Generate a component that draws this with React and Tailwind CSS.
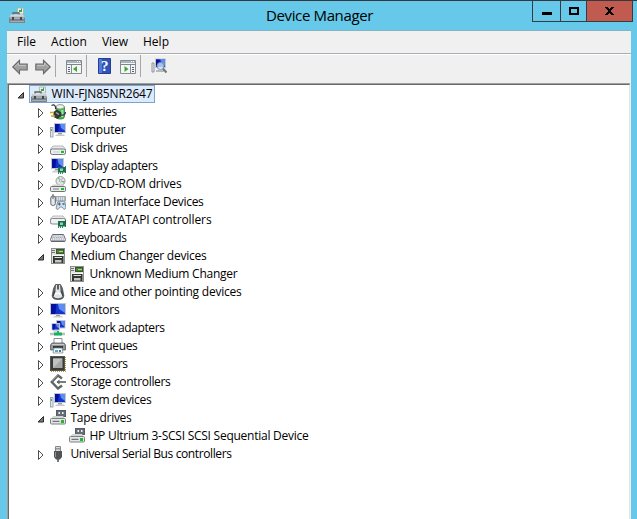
import { useLayoutEffect, useRef, useState } from "react";

// Spreads a label evenly over a fixed advance width.
function Label({ text, width, className = "" }) {
  const ref = useRef(null);
  const [gap, setGap] = useState(0);
  useLayoutEffect(() => {
    const natural = ref.current.getBoundingClientRect().width;
    setGap((width - natural) / text.length);
  }, [text, width]);
  return (
    <span ref={ref} className={`whitespace-pre ${className}`} style={{ letterSpacing: gap }}>
      {text}
    </span>
  );
}

function Svg({ children, className = "size-4" }) {
  return (
    <svg viewBox="0 0 16 16" className={`${className} shrink-0`} fill="none">
      {children}
    </svg>
  );
}

function Screen({ x = 0, y = 0, w = 10, h = 8 }) {
  return (
    <g>
      <rect x={x} y={y} width={w} height={h} fill="#c3c7cc" />
      <rect x={x + 1} y={y + 1} width={w - 2} height={h - 2} fill="#1534cc" />
      <path d={`M${x + w / 2} ${y + 1}H${x + w - 1}V${y + h - 2}L${x + w / 2 + 1} ${y + h / 2}Z`} fill="#5d8df2" />
      <path d={`M${x + 1} ${y + 1}h${w / 3}l-1 ${h - 2}H${x + 1}Z`} fill="#0511a0" />
    </g>
  );
}

const Toolbox = () => (
  <>
    <path d="M8.500 7V1h6v6Z" fill="#eceeee" stroke="#a9adaf" strokeWidth=".8" />
    <path d="M10 5V3h2V1.500h1V5Z" fill="#35a83a" />
    <path d="M4 9V6h6v3" stroke="#5d6264" strokeWidth="1.300" />
    <path d="M1 8h14l.7 3H.3Z" fill="#c2c7ca" />
    <path d="M2 8h12" stroke="#e1e5e7" />
    <path d="M0 10.500h16V16H0Z" fill="#7c858b" />
    <path d="M1 11.500h14M1 14.500h14" stroke="#a5adb2" />
    <path d="M3 10h2v3H3ZM11 10h2v3h-2Z" fill="#43494d" />
  </>
);

const Battery = () => (
  <>
    <rect x="6" y="1" width="8.500" height="14" rx="3" fill="#48bd54" stroke="#35663b" strokeWidth=".7" />
    <ellipse cx="10.200" cy="2.800" rx="4" ry="2.200" fill="#eef1ee" stroke="#7d857d" strokeWidth=".7" />
    <path d="M12.300 6v7" stroke="#a3ecaa" strokeWidth="1.800" />
    <path d="M1.500 1.500c3-1.500 4.500.5 4 3.500M11 11c3 .5 4.500-1 4.500-3" stroke="#333" strokeWidth="1.200" />
    <path d="M3.500 8 7 5.500l4.300 3v3.500L7.500 15l-4-2Z" fill="#343838" />
    <path d="m6 8.500 3 2" stroke="#a0a6a6" strokeWidth="1.500" />
    <path d="M0 8.500h4M1 12h4" stroke="#d5a917" strokeWidth="1.500" />
  </>
);

const Computer = () => (
  <>
    <rect x=".5" y="5.500" width="2.500" height="9.500" fill="#e3e6e8" stroke="#9aa0a4" strokeWidth=".9" />
    <path d="M1 7h1v2H1Z" fill="#35bd4b" />
    <Screen x={4} y={1} w={12} h={10} />
    <path d="M8 11h4v1.500H8Z" fill="#969da3" />
    <path d="M6 12.500h8l1 1.500H5Z" fill="#c4c8cb" />
  </>
);

const Disk = () => (
  <>
    <path d="M3 6h10l2.500 3v4.500H.5V9Z" fill="#e6e8e9" stroke="#a5a9ab" strokeWidth=".8" />
    <rect x=".5" y="9" width="15" height="5.500" rx="1.800" fill="#eff0f0" stroke="#74797b" />
    <path d="M3 12h7" stroke="#c5c8c9" />
    <rect x="11" y="10.800" width="3" height="2.200" fill="#24b929" />
  </>
);

const Card = () => (
  <>
    <path d="M8 9h7.500v5.500H8Z" fill="#16704e" />
    <path d="M8.500 14v2M10.500 14v2M12.500 14v2" stroke="#2b8f68" />
    <rect x="10" y="10.500" width="3" height="2.500" fill="#98cbb7" />
    <path d="M15.500 8v7" stroke="#224f3e" strokeWidth=".8" />
  </>
);

const Display = () => (
  <>
    <Screen x={1} y={0} w={13} h={11} />
    <path d="M5 11h3v1.500H5Z" fill="#9aa0a5" />
    <path d="M3 12.500h5v2H2Z" fill="#cbd0d4" />
    <Card />
  </>
);

const Dvd = () => (
  <>
    <circle cx="10.500" cy="5" r="4.500" fill="#e4e7e6" stroke="#9a9e9e" />
    <path d="m10.500 5-3-3 1.500-1ZM10.500 5l3.500 2 .5-2Z" fill="#72b982" />
    <path d="m10.500 5 2-3.500 1 1Z" fill="#c4a4c4" />
    <circle cx="10.500" cy="5" r="1.100" fill="#fff" stroke="#8b9090" strokeWidth=".6" />
    <path d="m3 8.500-2.500 3h15l-2.500-3Z" fill="#d0d4d5" />
    <rect x=".5" y="10.500" width="15" height="5" rx="1" fill="#e7e9e9" stroke="#6f7476" />
    <path d="M3 13h6" stroke="#777c7e" />
    <path d="M11 12h3v2h-3Z" fill="#1dba24" />
  </>
);

const Hid = () => (
  <>
    <path d="M5 2.500h10.500V7H5Z" fill="#dde0e2" stroke="#8d9397" strokeWidth=".8" />
    <path d="M6 4h9M6 6h9" stroke="#8a9197" strokeDasharray="1 1" />
    <rect x=".8" y="2" width="4.500" height="9.500" rx="2" fill="#e6eaec" stroke="#5d666e" />
    <path d="M3 0v5" stroke="#535b62" />
    <path d="m7.500 8 2-.7h4l1.500.7 1 6-2 1.500L12 13h-2l-2 2.500-2-1Z" fill="#d4e0ea" stroke="#6a7d8c" strokeWidth=".8" />
    <path d="M7.800 10h3M9.300 8.500v3" stroke="#31557b" />
    <path d="M12.500 9h2v2h-2Z" fill="#3f83c4" />
  </>
);

const Ide = () => (
  <>
    <path d="M3 4h10l2.500 3v4.500H.5V7Z" fill="#e6e8e9" stroke="#a0a5a8" strokeWidth=".7" />
    <rect x=".5" y="6.500" width="15" height="5.500" rx="1.800" fill="#f0f2f2" stroke="#858b8e" />
    <Card />
  </>
);

const Keyboard = () => (
  <>
    <path d="m2.500 4.500h11l2 5-.7 2H1.200l-.7-2Z" fill="#e9ebee" stroke="#646975" />
    <path d="M3 6h10M2.500 7.500h11M2 9h12" stroke="#8b90a0" strokeDasharray="1 .8" strokeWidth=".9" />
    <path d="M1.500 11h13" stroke="#595e6a" />
  </>
);

const Changer = () => (
  <>
    <rect x="1.500" y=".5" width="13" height="15" fill="#e2e3df" stroke="#8b8e89" />
    <path d="M2 2.500h3M2 4.500h3" stroke="#6f726d" />
    <rect x="6.500" y="1.500" width="7" height="4" fill="#3f8a22" stroke="#454a45" />
    <path d="M9 3.500h4" stroke="#a2e46e" />
    <path d="M2 7.500h12" stroke="#f8f8f6" />
    <rect x="3" y="8" width="10.500" height="7" fill="#333735" />
    <path d="M4.500 9.500h7.500" stroke="#dcdedb" />
    <path d="M5 12h6.500v2.500H5Z" fill="#c5c8c5" />
  </>
);

const Mouse = () => (
  <>
    <path d="M5.500.5h5l2 4 1.300 7c0 3-2 4-5.800 4s-5.800-1-5.800-4l1.300-7Z" fill="#5c6165" stroke="#3e4346" strokeWidth=".7" />
    <path d="M6 1h4l.5 6 2 5c-1 3-8 3-9 0l2-5Z" fill="#e1e4e6" />
    <path d="M8 1v4.500" stroke="#292d30" strokeWidth="1.500" />
    <path d="M5.500 10.500q2.500-3 5 0" stroke="#fff" strokeWidth="1.500" />
    <path d="M5 7 3 12M11 7l2 5" stroke="#34393c" />
  </>
);

const Monitor = () => (
  <>
    <Screen x={0} y={1} w={16} h={12} />
    <path d="M6 13h4v1H6Z" fill="#979da2" />
    <path d="M4 14h8l1 1.500H3Z" fill="#cbd0d4" />
  </>
);

const Network = () => (
  <>
    <Screen x={6} y={0} w={9.5} h={8.5} />
    <Screen x={1.5} y={3} w={8.5} h={7.5} />
    <path d="M4 10.500h4v1H3Z" fill="#b4bcc2" />
    <path d="M8 11v3" stroke="#36a55e" strokeWidth="2" />
    <path d="M0 14h15" stroke="#b7c3bc" strokeWidth="2.500" />
    <path d="M4 14h8" stroke="#15b065" strokeWidth="3" />
  </>
);

const Printer = () => (
  <>
    <path d="M4 .5h8V6H4Z" fill="#fff" stroke="#8a8e91" />
    <path d="M2 5h12l1.500 2v5H.5V7Z" fill="#92989c" stroke="#565b5f" strokeWidth=".8" />
    <path d="M2 6.500h12" stroke="#c7cbce" />
    <path d="M3 9h10" stroke="#34393c" strokeWidth="2" />
    <path d="M4 10h8l1 5H3Z" fill="#f6f8f9" stroke="#797f84" strokeWidth=".7" />
    <path d="M5 12h3v2H5Z" fill="#4ba7cb" />
    <path d="M9 12h2v2H9Z" fill="#426fa5" />
  </>
);

const Cpu = () => (
  <>
    <path d="M1 15.300h15M15.300 1v14" stroke="#c29a3a" strokeWidth="1.400" strokeDasharray="1 1" />
    <rect x=".5" y=".5" width="14" height="14" fill="#3a3a3a" stroke="#555" />
    <rect x="3" y="2.500" width="9.500" height="9.500" fill="#a5a7a7" />
    <path d="M3 12V2.500h9.500Z" fill="#c0c2c2" />
  </>
);

const Storage = () => (
  <>
    <path d="M12 4.500 8 1.500 1.800 8 8 14.500l4-3" stroke="#606464" strokeWidth="2.400" />
    <path d="M7 8h9" stroke="#6b6f6f" strokeWidth="1.800" />
    <path d="m6.500 8 3-2.500v5Z" fill="#606464" />
    <path d="M8 1 2 7" stroke="#999d9d" strokeWidth=".8" />
  </>
);

const Tape = () => (
  <>
    <rect x="6.500" y=".5" width="9" height="6" fill="#676d72" stroke="#565c61" />
    <path d="M8.500 2h1.500v2H8.500ZM12 2h1.500v2H12Z" fill="#f0f2f3" />
    <path d="m3 6-2.500 3.500h15L13 6Z" fill="#d3d6d6" />
    <rect x=".5" y="8.500" width="15" height="5.500" rx="1" fill="#e4e6e6" stroke="#7a8083" />
    <path d="M2.500 11.300h7" stroke="#555b5e" />
    <path d="M11 10h3v3h-3Z" fill="#22b829" />
  </>
);

const Usb = () => (
  <>
    <path d="M5.500.5h5V6h-5Z" fill="#d9dbdc" stroke="#85898b" />
    <path d="M6.500 2h1v1.500h-1ZM8.500 2h1v1.500h-1Z" fill="#555" />
    <path d="M4 5h8v6l-2 2.500H6L4 11Z" fill="#505456" />
    <path d="M5.500 6v5" stroke="#8f9496" />
    <path d="M8 13v3" stroke="#4c5052" strokeWidth="1.500" />
  </>
);

const devices = [
  ["Batteries", 46, Battery],
  ["Computer", 55, Computer],
  ["Disk drives", 57, Disk],
  ["Display adapters", 87, Display],
  ["DVD/CD-ROM drives", 111, Dvd],
  ["Human Interface Devices", 133, Hid],
  ["IDE ATA/ATAPI controllers", 141, Ide],
  ["Keyboards", 56, Keyboard],
  ["Medium Changer devices", 136, Changer, ["Unknown Medium Changer", 148]],
  ["Mice and other pointing devices", 171, Mouse],
  ["Monitors", 49, Monitor],
  ["Network adapters", 94, Network],
  ["Print queues", 67, Printer],
  ["Processors", 57, Cpu],
  ["Storage controllers", 100, Storage],
  ["System devices", 81, Computer],
  ["Tape drives", 61, Tape, ["HP Ultrium 3-SCSI SCSI Sequential Device", 219]],
  ["Universal Serial Bus controllers", 161, Usb],
];

function Arrow({ open }) {
  return (
    <svg viewBox="0 0 8 18" className="h-[18px] w-2 shrink-0">
      {open ? (
        <path d="M6.500 7.500v5.500H1Z" fill="#777" stroke="#2b2b2b" />
      ) : (
        <path d="M1.500 5.500v9L6 10Z" fill="#fff" stroke="#4d4d4d" />
      )}
    </svg>
  );
}

function DeviceRow({ device }) {
  const [name, width, Icon, child] = device;
  return (
    <li>
      <div className="flex h-[18px] items-center pl-7">
        <Arrow open={!!child} />
        <span className="ml-[5px] flex items-center gap-[4.500px]">
          <Svg><Icon /></Svg>
          <Label text={name} width={width} />
        </span>
      </div>
      {child && (
        <div className="flex h-[18px] items-center gap-[4.500px] pl-[60px]">
          <Svg><Icon /></Svg>
          <Label text={child[0]} width={child[1]} />
        </div>
      )}
    </li>
  );
}

function Nav({ flip }) {
  return (
    <Svg className={flip ? "size-4 -scale-x-100" : "size-4"}>
      <path d="m.8 8 6.700-6.700V5h7.700v6H7.500v3.700Z" fill="#a0a0a0" stroke="#686868" strokeWidth="1.100" />
      <path d="m2.500 8 4-4v2.500H14" stroke="#c3c3c3" strokeWidth="1" />
    </Svg>
  );
}

function Pane({ right }) {
  return (
    <Svg>
      <path d="M.5 1.500h15v13H.5Z" fill="#f4f5f6" stroke="#848b92" />
      <path d="M1 3h14" stroke="#a9b4bf" strokeWidth="2" />
      <path d="M11 2.500h1M13 2.500h1" stroke="#fff" />
      <path d="M1 5.500h14" stroke="#7e858b" />
      {right ? (
        <>
          <path d="M10.500 6v8" stroke="#858b90" />
          <path d="M12 8.500h2M12 10.500h2M12 12.500h2" stroke="#536575" />
          <path d="m4.500 7 4 3-4 3Z" fill="#43a62c" />
        </>
      ) : (
        <>
          <path d="M5.500 6v8" stroke="#858b90" />
          <path d="M2 8.500h2M2 10.500h2M2 12.500h2" stroke="#536575" />
          <path d="m11 7-4 3 4 3Z" fill="#43a62c" />
        </>
      )}
    </Svg>
  );
}

const Divider = () => <span className="h-[22px] w-px bg-[#a7a7a7]" />;

export default function App() {
  return (
    <main className="flex h-[519px] w-[637px] flex-col overflow-hidden border-t border-[#35383c] bg-[#66c9e9] font-['Open_Sans','Noto_Sans',sans-serif] text-[12px] leading-[18px] text-black">
      <header className="flex h-[29px] shrink-0 items-start">
        <span className="flex w-[266px] pt-[6px] pl-[9px]"><Svg><Toolbox /></Svg></span>
        <h1 className="w-[266px] pt-[3px] text-[15px] leading-[23px]"><Label text="Device Manager" width={107} /></h1>
        <div className="flex h-[21px] border-x border-b border-[#383c40]">
          <button className="flex w-[27px] items-start justify-center pt-[11px]"><i className="h-[3px] w-[10px] bg-black" /></button>
          <button className="flex w-[26px] items-start justify-center border-l border-[#383c40] pt-[6px]"><i className="h-2 w-[10px] border-2 border-black" /></button>
          <button className="flex w-[46px] items-start justify-center border-l border-[#383c40] bg-[#c15b50] pt-[6px]">
            <svg viewBox="0 0 9 8" className="h-2 w-[9px]"><path d="M0 0h3v1h1v1h1V1h1V0h3v1H8v1H7v1H6v2h1v1h1v1h1v1H6V7H5V6H4v1H3v1H0V7h1V6h1V5h1V3H2V2H1V1H0Z" fill="#000" /></svg>
          </button>
        </div>
      </header>
      <section className="ml-[7px] flex w-[624px] grow flex-col border-t border-[#87b2c3] bg-[#f0f0f0]">
        <nav className="flex h-[23px] shrink-0 border-b border-[#a9adb6] pt-[2px] pl-[10px]">
          <span className="w-[34px]"><Label text="File" width={19} /></span>
          <span className="w-[51px]"><Label text="Action" width={36} /></span>
          <span className="w-[41px]"><Label text="View" width={26} /></span>
          <Label text="Help" width={26} />
        </nav>
        <div className="flex h-[29px] shrink-0 items-start border-t border-white pl-[5px]">
          <div className="flex gap-[7px] pt-[4px]"><Nav /><Nav flip /></div>
          <div className="ml-[4px] flex"><Divider /></div>
          <div className="ml-[10px] flex pt-[4px]"><Pane /></div>
          <div className="ml-[4px] flex"><Divider /></div>
          <div className="ml-[11px] flex pt-[3px]">
            <svg viewBox="0 0 13 16" className="h-4 w-[13px]">
              <path d="M.5.5h12v15H.5Z" fill="#2e53ba" stroke="#223f91" />
              <path d="M1 1h3v14H1Z" fill="#5579d8" />
              <text x="6.800" y="13" textAnchor="middle" fontFamily="Liberation Serif" fontWeight="bold" fontSize="15" fill="white">?</text>
            </svg>
          </div>
          <div className="ml-[9px] flex pt-[4px]"><Pane right /></div>
          <div className="ml-[4px] flex"><Divider /></div>
          <div className="ml-[10px] flex pt-[3px]">
            <Svg>
              <path d="M1 5h2v9H1Z" fill="#e5e9ec" stroke="#8b969f" />
              <Screen x={4} y={0.5} w={11} h={9.5} />
              <path d="M5 12h8v2H5Z" fill="#b2bac0" />
              <circle cx="9.500" cy="8" r="3.500" fill="#d7eefd" fillOpacity=".75" stroke="#8196a8" />
              <path d="m12 10.500 3.500 4" stroke="#73777b" strokeWidth="2" />
            </Svg>
          </div>
        </div>
        <div className="mr-px flex min-h-0 grow border-t border-l border-[#a0a0a0]">
          <ul className="grow border-t border-l border-r border-t-[#696969] border-r-[#e3e3e3] border-l-[#696969] bg-white">
            <li className="flex h-[18px] items-center pl-2">
              <Arrow open />
              <div className="ml-[4px] flex h-[18px] w-[126px] items-center gap-[4.500px] border border-[#7da2ce] bg-[#dcebfc] pl-px">
                <Svg><Toolbox /></Svg>
                <Label text="WIN-FJN85NR2647" width={101} />
              </div>
            </li>
            {devices.map((device) => <DeviceRow key={device[0]} device={device} />)}
          </ul>
        </div>
      </section>
    </main>
  );
}
